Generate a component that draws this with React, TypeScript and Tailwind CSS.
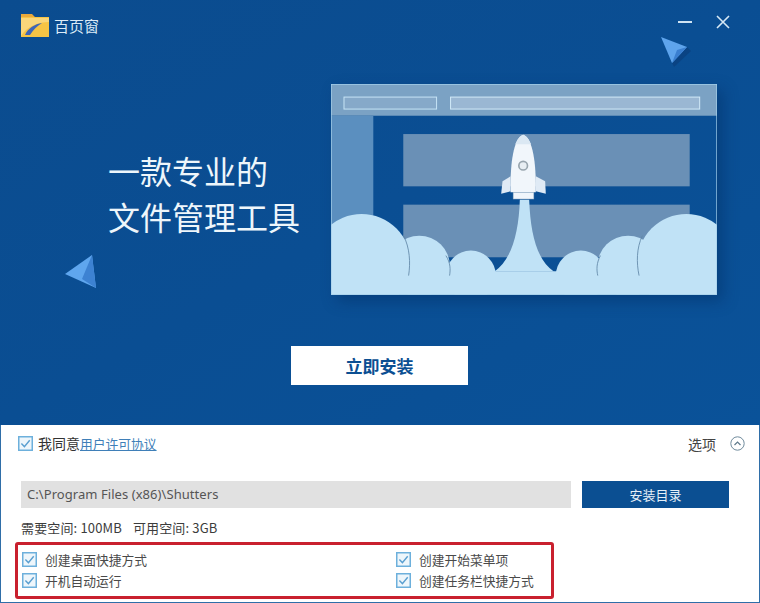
import React from "react";

function Check({ className = "" }: { className?: string }) {
  return (
    <svg viewBox="0 0 15 15" className={"w-[15px] h-[15px] shrink-0 " + className}>
      <rect x="0.75" y="0.75" width="13.5" height="13.5" fill="#eef6fb" stroke="#6db0dc" strokeWidth="1.5" />
      <path d="M3.4 7.6 L6.4 10.6 L11.7 4.2" fill="none" stroke="#5a9fd0" strokeWidth="1.4" />
    </svg>
  );
}

function Triangle({ className, flip }: { className: string; flip?: boolean }) {
  return (
    <svg viewBox="0 0 32 34" className={className}>
      {flip ? (
        <>
          <path d="M27 10 L31 14 L14 30 L12 26 Z" fill="#0a3f7c" opacity="0.7" />
          <path d="M1 0 L27 10 L12 26 Z" fill="#5ea4ec" />
          <path d="M27 10 L12 26 L17 13 Z" fill="#3a7fd0" />
        </>
      ) : (
        <>
          <path d="M0 19 L27 0 L31 33 Z" fill="#5fa6ee" />
          <path d="M27 0 L31 33 L17 24 Z" fill="#3d82d2" />
        </>
      )}
    </svg>
  );
}

function Illustration() {
  const cloud = "#c0e2f6";
  return (
    <svg viewBox="33 253 1159 633" className="w-[386px] h-[211px] block">
      <defs>
        <clipPath id="win">
          <rect x="33" y="253" width="1159" height="633" />
        </clipPath>
      </defs>
      <rect x="33" y="253" width="1159" height="95" fill="#7ba2c4" />
      <rect x="33" y="348" width="127" height="330" fill="#5b8fbf" />
      <rect x="72" y="292" width="278" height="36" fill="#86a9c9" stroke="#c6e4f6" strokeWidth="3" />
      <rect x="392" y="292" width="748" height="36" fill="#9ab7d3" stroke="#d2eaf8" strokeWidth="3" />
      <rect x="250" y="403" width="860" height="157" fill="#6a90b6" />
      <rect x="250" y="615" width="860" height="158" fill="#6a90b6" />
      <g clipPath="url(#win)">
        <path d="M524 816 C 575 780 597 700 600 600 L 628 600 C 632 700 650 780 702 816 Z" fill={cloud} />
        <circle cx="783" cy="828" r="75" fill={cloud} />
        <circle cx="453" cy="828" r="75" fill={cloud} />
        <circle cx="925" cy="800" r="92" fill={cloud} />
        <circle cx="298" cy="800" r="92" fill={cloud} />
        <circle cx="1100" cy="790" r="147" fill={cloud} />
        <circle cx="125" cy="790" r="147" fill={cloud} />
        <rect x="33" y="815" width="1159" height="71" fill={cloud} />
        <path d="M250 706 C 270 745 272 790 266 828" fill="none" stroke="#5f86a6" strokeWidth="2.5" />
        <path d="M378 768 C 392 790 392 810 389 828" fill="none" stroke="#5f86a6" strokeWidth="2.5" />
        <path d="M842 768 C 830 790 830 810 834 828" fill="none" stroke="#5f86a6" strokeWidth="2.5" />
        <path d="M968 708 C 950 745 950 790 958 828" fill="none" stroke="#5f86a6" strokeWidth="2.5" />
      </g>
      <path d="M572 530 L548 545 L544 582 L572 575 Z" fill="#dfeaf5" />
      <path d="M648 530 L676 545 L678 582 L648 575 Z" fill="#dfeaf5" />
      <path d="M610 405 C 634 412 648 470 648 560 L 648 578 L 572 578 L 572 560 C 572 470 586 412 610 405 Z" fill="#f1f6fb" />
      <path d="M610 405 C 620 408 628 420 634 434 L 586 434 C 592 420 600 408 610 405 Z" fill="#dbe8f3" />
      <rect x="580" y="578" width="62" height="20" fill="#f1f6fb" stroke="#9fb4c8" strokeWidth="1.5" />
      <circle cx="610" cy="498" r="13" fill="#e8eef3" stroke="#98a5ae" strokeWidth="5" />
      <rect x="33" y="253" width="1159" height="633" fill="none" stroke="#a6d0ea" strokeWidth="4" />
    </svg>
  );
}

function Folder() {
  return (
    <svg viewBox="0 0 28 23" className="w-[28px] h-[23px] block">
      <path d="M0 0 H11 L14 3 H28 V5 H0 Z" fill="#e8a93c" />
      <rect x="0" y="3" width="28" height="20" fill="#f6c445" />
      <path d="M0 4 H28 V8 C18 8 6 12 0 22 Z" fill="#f9d67a" />
      <path d="M4 21 C7 14 14 10 21 9 C16 12 12 16 9 21 Z" fill="#3f66b8" />
    </svg>
  );
}

function Option({ label }: { label: string }) {
  return (
    <div className="flex items-center gap-[8px] h-[21px]">
      <Check />
      <span className="text-[12.75px] leading-[21px] text-[#4a4a4a]">{label}</span>
    </div>
  );
}

export default function App() {
  return (
    <div className="w-[760px] h-[603px] overflow-hidden flex flex-col bg-white font-['Noto_Sans_CJK_SC','Noto_Sans',sans-serif]">
      <div className="relative h-[425px] shrink-0 bg-gradient-to-br from-[#0b4c8f] via-[#0a4e93] to-[#0a5299] text-white">
        <div className="flex items-start justify-between pl-[21px] pr-[30px] pt-[14px] h-[84px]">
          <div className="flex items-center gap-[5px]">
            <Folder />
            <span className="text-[15px] leading-[23px] text-[#dcebf7]">百页窗</span>
          </div>
          <div className="flex items-center gap-[24px] pt-[1px]">
            <div className="w-[14px] h-[2px] bg-[#cfe3f3]" />
            <svg viewBox="0 0 14 14" className="w-[14px] h-[14px]">
              <path d="M1 1 L13 13 M13 1 L1 13" stroke="#d6e8f5" strokeWidth="1.6" fill="none" />
            </svg>
          </div>
        </div>
        <div className="flex items-start pl-[108px]">
          <div className="w-[223px] pt-[63px] text-[32px] leading-[46px] text-[#eef6fb] whitespace-nowrap">
            <div>一款专业的</div>
            <div>文件管理工具</div>
          </div>
          <div className="shadow-[6px_6px_14px_rgba(3,40,90,0.4)]">
            <Illustration />
          </div>
        </div>
        <div className="flex justify-center pt-[51px] pr-[1px]">
          <div className="w-[177px] h-[39px] bg-white flex items-center justify-center text-[17px] font-bold text-[#0b4f92]">
            立即安装
          </div>
        </div>
        <Triangle className="absolute left-[65px] top-[255px] w-[32px] h-[34px]" />
        <Triangle flip className="absolute left-[660px] top-[37px] w-[32px] h-[34px]" />
      </div>

      <div className="flex-1 border-x border-b border-[#2f6ea8] pl-[17px] pr-[14px] text-[#333333]">
        <div className="flex items-center justify-between h-[37px]">
          <div className="flex items-center gap-[5px]">
            <Check />
            <span className="text-[14px] leading-[20px]">
              我同意<span className="text-[12.75px] text-[#3f7fb8] underline">用户许可协议</span>
            </span>
          </div>
          <div className="flex items-center gap-[14px]">
            <span className="text-[14px] leading-[20px] text-[#444444]">选项</span>
            <svg viewBox="0 0 15 15" className="w-[15px] h-[15px]">
              <circle cx="7.5" cy="7.5" r="6.7" fill="none" stroke="#6f8a9c" strokeWidth="1" />
              <path d="M4.5 9 L7.5 6 L10.5 9" fill="none" stroke="#5f7a8c" strokeWidth="1.2" />
            </svg>
          </div>
        </div>
        <div className="flex gap-[11px] mt-[19px] pl-[3px]">
          <div className="w-[550px] h-[27px] bg-[#e1e1e1] pl-[6px] pt-[1px] flex items-center text-[13px] tracking-[0.06px] text-[#555555] font-['Noto_Sans',sans-serif]">
            {"C:\\Program Files (x86)\\Shutters"}
          </div>
          <div className="w-[147px] h-[27px] bg-[#0b4f92] flex items-center justify-center text-[13px] text-[#e6f0f8]">
            安装目录
          </div>
        </div>
        <div className="flex gap-[11px] mt-[11px] pl-[3px] text-[13px] tracking-[0.15px] leading-[18px] text-[#3c3c3c]">
          <span>需要空间: 100MB</span>
          <span>可用空间: 3GB</span>
        </div>
        <div className="mt-[5px] -ml-[3px] w-[539px] h-[57px] border-[3px] border-[#c9202e] rounded-[3px] pl-[4px] pt-[4px] grid grid-cols-[374px_1fr]">
          <div>
            <Option label="创建桌面快捷方式" />
            <Option label="开机自动运行" />
          </div>
          <div>
            <Option label="创建开始菜单项" />
            <Option label="创建任务栏快捷方式" />
          </div>
        </div>
      </div>
    </div>
  );
}
